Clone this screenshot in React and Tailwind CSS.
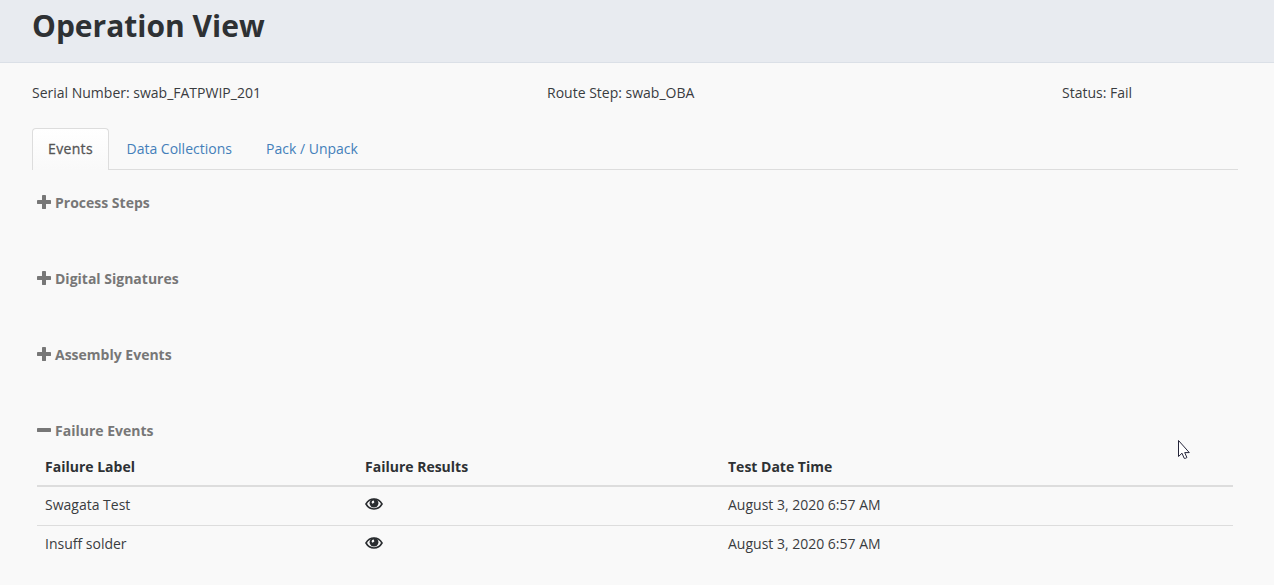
const Plus = () => (
  <svg className="h-[14px] w-[14px] shrink-0 -translate-y-px" viewBox="0 0 14 14" fill="currentColor" aria-hidden="true">
    <rect x="5" width="4" height="14" rx=".4" />
    <rect y="5" width="14" height="4" rx=".4" />
  </svg>
);

const Minus = () => (
  <svg className="h-[14px] w-[14px] shrink-0 -translate-y-px" viewBox="0 0 14 14" fill="currentColor" aria-hidden="true">
    <rect y="5" width="14" height="4" rx=".4" />
  </svg>
);

const Eye = () => (
  <svg className="mt-[3px] h-3 w-[18px]" viewBox="0 0 18 12" aria-hidden="true">
    <path d="M1 6C2.700 3 5.600 1 9 1s6.300 2 8 5c-1.700 3-4.600 5-8 5S2.700 9 1 6z" fill="none" stroke="#2a2d30" strokeWidth="1.600" />
    <circle cx="9" cy="5.200" r="4.400" fill="#2a2d30" />
    <path d="M6.600 4.800q0-2.200 2.200-2.200l.5 1.900-1.600 1.200z" fill="#f9f9f9" />
  </svg>
);

const Cursor = () => (
  <svg className="absolute left-[1178px] top-[440px] h-5 w-3" viewBox="0 0 12 20" aria-hidden="true">
    <path d="M.5.500v16l3.500-3.300 2.200 5.100h1.300l1.400-.8-2.200-4.900h4.600z" fill="#fff" stroke="#25253a" strokeWidth="1" />
  </svg>
);

const sections = ["Process Steps", "Digital Signatures", "Assembly Events"];
const rows = ["Swagata Test", "Insuff solder"];
const columns = "grid grid-cols-[320px_363px_1fr] px-2";

const Heading = ({ icon, children, className }) => (
  <h2 className={`flex items-center gap-1 text-[14px] font-bold leading-5 text-[#777] ${className}`}>
    {icon}
    <span>{children}</span>
  </h2>
);

export default function App() {
  return (
    <div className="relative h-[585px] w-[1274px] overflow-hidden bg-[#f9f9f9] font-['Open_Sans',sans-serif] text-[14px] leading-5 text-[#393c3f]">
      <header className="h-[63px] border-b border-[#dbe0e7] bg-[#e8ebf0] pl-8 pt-1.5">
        <h1 className="text-[30px] font-bold leading-10 text-[#2e3134]">Operation View</h1>
      </header>
      <main className="pl-8 pr-9 pt-5">
        <div className="grid grid-cols-[515px_515px_1fr]">
          <span>Serial Number: swab_FATPWIP_201</span>
          <span>Route Step: swab_OBA</span>
          <span>Status: Fail</span>
        </div>
        <nav className="mt-[25px] flex h-[42px] border-b border-[#ddd] text-[#447fba]">
          <a className="h-[42px] w-[77px] rounded-t border border-b-0 border-[#ddd] bg-linear-to-b from-white to-[#f9f9f9] pl-[15px] pt-2.5 tracking-[0.35px] text-[#555] [-webkit-text-stroke:0.3px_#555]">Events</a>
          <a className="w-[140px] pl-[17.500px] pt-[11px]">Data Collections</a>
          <a className="pl-[17px] pt-[11px]">Pack / Unpack</a>
        </nav>
        <div className="pl-[5px] pr-[5px] pt-[23px]">
          {sections.map((name) => (
            <Heading key={name} icon={<Plus />} className="mb-14">{name}</Heading>
          ))}
          <Heading icon={<Minus />}>Failure Events</Heading>
          <div className={`${columns} h-[46px] border-b-2 border-[#ddd] pt-4 font-bold text-[#2e3134]`}>
            <span>Failure Label</span>
            <span>Failure Results</span>
            <span>Test Date Time</span>
          </div>
          {rows.map((name) => (
            <div key={name} className={`${columns} h-[39px] items-start border-b border-[#ddd] pt-2 last:border-b-0`}>
              <span>{name}</span>
              <Eye />
              <span>August 3, 2020 6:57 AM</span>
            </div>
          ))}
        </div>
      </main>
      <Cursor />
    </div>
  );
}
